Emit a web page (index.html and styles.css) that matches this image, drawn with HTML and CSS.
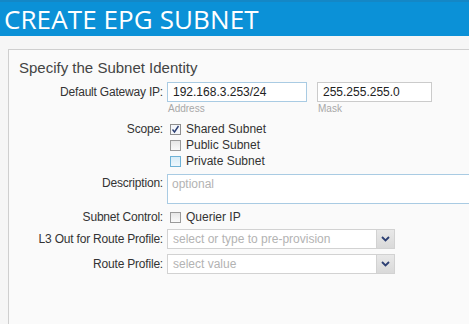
FILE: index.html
```html
<!DOCTYPE html>
<html lang="en">
<head>
  <meta charset="UTF-8">
  <title>Create EPG Subnet</title>
  <link rel="stylesheet" href="styles.css">
</head>
<body>
  <header class="dialog-header">
    <h1>CREATE EPG SUBNET</h1>
  </header>

  <div class="content">
    <div class="panel">
      <h2>Specify the Subnet Identity</h2>

      <!-- Gateway -->
      <div class="row row-gateway">
        <label class="field-label">Default Gateway IP:</label>
        <div class="pair">
          <div class="sub-field">
            <div class="text-input focus ip">192.168.3.253/24</div>
            <span class="hint">Address</span>
          </div>
          <div class="sub-field">
            <div class="text-input mask">255.255.255.0</div>
            <span class="hint">Mask</span>
          </div>
        </div>
      </div>

      <!-- Scope -->
      <div class="row row-scope">
        <label class="field-label">Scope:</label>
        <div class="checks">
          <div class="check"><span class="box checked"><svg viewBox="0 0 11 11" width="11" height="11"><path d="M2.5 5.5 L4.5 8 L8.5 2" fill="none" stroke="#2c3f73" stroke-width="1.4"/></svg></span>Shared Subnet</div>
          <div class="check"><span class="box"></span>Public Subnet</div>
          <div class="check"><span class="box hover"></span>Private Subnet</div>
        </div>
      </div>

      <!-- Description -->
      <div class="row row-desc">
        <label class="field-label">Description:</label>
        <div class="textarea">optional</div>
      </div>

      <!-- Subnet control -->
      <div class="row row-control">
        <label class="field-label">Subnet Control:</label>
        <div class="check"><span class="box"></span>Querier IP</div>
      </div>

      <!-- Combos -->
      <div class="row row-combo">
        <label class="field-label">L3 Out for Route Profile:</label>
        <div class="combo">
          <span class="placeholder">select or type to pre-provision</span>
          <span class="arrow"><svg viewBox="0 0 9 6" width="9" height="6"><path d="M1 1 L4.5 4.5 L8 1" fill="none" stroke="#2c3f73" stroke-width="1.8"/></svg></span>
        </div>
      </div>
      <div class="row row-combo">
        <label class="field-label">Route Profile:</label>
        <div class="combo">
          <span class="placeholder">select value</span>
          <span class="arrow"><svg viewBox="0 0 9 6" width="9" height="6"><path d="M1 1 L4.5 4.5 L8 1" fill="none" stroke="#2c3f73" stroke-width="1.8"/></svg></span>
        </div>
      </div>
    </div>
  </div>
</body>
</html>
```

FILE: styles.css
```css
body {
  margin: 0;
  padding: 0;
  background-color: #f6f6f6;
  font-family: "Liberation Sans", Arial, sans-serif;
  font-size: 12px;
  color: #333;
  overflow: hidden;
}
.dialog-header {
  background-color: #0b91d7;
  border-top: 2px solid #1487c6;
  height: 34px;
}
.dialog-header h1 {
  margin: 0;
  padding-left: 4px;
  font-family: "Open Sans", sans-serif;
  font-weight: 400;
  font-size: 26px;
  line-height: 34px;
  color: #fff;
  letter-spacing: 0.1px;
}
.content {
  padding: 13px 0 0 8px;
}
.panel {
  background-color: #fafafa;
  border: 1px solid #cfcfcf;
  border-right: none;
  padding: 9px 0 60px 10px;
}
.panel h2 {
  margin: 0 0 5px 0;
  font-family: "Liberation Sans", Arial, sans-serif;
  font-weight: 400;
  font-size: 15px;
  line-height: 18px;
  color: #444;
}
.row {
  display: grid;
  grid-template-columns: 144px 1fr;
  column-gap: 4px;
}
.field-label {
  text-align: right;
  white-space: nowrap;
  color: #333;
  letter-spacing: -0.2px;
}
.row-gateway .field-label {
  line-height: 20px;
}
.pair {
  display: flex;
  gap: 10px;
}
.sub-field {
  display: flex;
  flex-direction: column;
}
.text-input {
  height: 18px;
  line-height: 18px;
  border: 1px solid #cbcbcb;
  background-color: #fff;
  padding: 0 5px;
  color: #222;
}
.text-input.focus {
  border-color: #a9cbe3;
}
.ip {
  width: 128px;
}
.mask {
  width: 103px;
}
.hint {
  font-size: 10px;
  color: #a8a8a8;
  padding-left: 1px;
  line-height: 13px;
}
.row-scope {
  margin-top: 6px;
}
.row-scope .field-label,
.row-control .field-label {
  line-height: 16px;
}
.checks {
  display: flex;
  flex-direction: column;
}
.check {
  display: flex;
  align-items: center;
  height: 16px;
  color: #333;
}
.box {
  width: 9px;
  height: 9px;
  border: 1px solid #9a9a9a;
  background: linear-gradient(#e6e6e6, #fafafa);
  margin: 0 5px 0 3px;
  position: relative;
}
.box svg {
  position: absolute;
  left: -1px;
  top: -1px;
}
.box.checked {
  background: #f4f6fa;
  border-color: #8e8e8e;
}
.box.hover {
  border-color: #6fb2d6;
  background: linear-gradient(#d8ecf7, #eef7fc);
}
.row-desc {
  margin-top: 5px;
}
.row-desc .field-label {
  line-height: 18px;
}
.textarea {
  height: 26px;
  border: 1px solid #a9cbe3;
  border-right: none;
  background-color: #fff;
  padding: 2px 4px 0;
  color: #b3b3b3;
  line-height: 14px;
}
.row-control {
  margin-top: 5px;
}
.row-combo {
  margin-top: 5px;
}
.row-control + .row-combo {
  margin-top: 4px;
}
.row-combo .field-label {
  line-height: 20px;
}
.combo {
  width: 226px;
  height: 18px;
  display: flex;
  border: 1px solid #d2d2d2;
  background-color: #fff;
}
.placeholder {
  flex: 1;
  line-height: 18px;
  padding-left: 5px;
  color: #b3b3b3;
}
.arrow {
  width: 17px;
  display: flex;
  align-items: center;
  justify-content: center;
  background: linear-gradient(#e8e8e8, #d9d9d9);
  border-left: 1px solid #d2d2d2;
}
```
